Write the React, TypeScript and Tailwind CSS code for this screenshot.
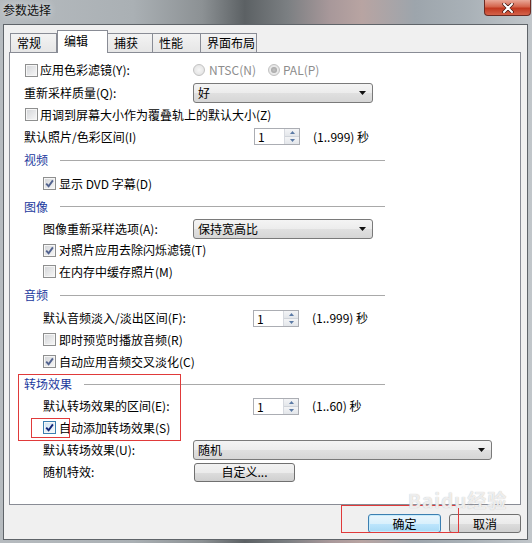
import React from "react";

const Check = ({ checked = false, strong = false }: { checked?: boolean; strong?: boolean }) => (
  <span
    className={`inline-flex h-[13px] w-[13px] shrink-0 items-center justify-center border ${
      strong ? "border-[#3c7fb1] bg-[linear-gradient(135deg,#cfe3f2,#f4f9fd)]" : "border-[#8e8f8f] bg-[linear-gradient(135deg,#d2d4d7,#f8f8f8)]"
    } shadow-[inset_0_0_0_1px_#f6f6f6]`}
  >
    {checked && (
      <svg width="9" height="9" viewBox="0 0 9 9">
        <path d="M1.2 4.6 L3.6 7.2 L7.9 1.4" fill="none" stroke={strong ? "#13277a" : "#52638f"} strokeWidth="1.9" />
      </svg>
    )}
  </span>
);

const Radio = ({ on = false }: { on?: boolean }) => (
  <span className="inline-flex h-[12px] w-[12px] shrink-0 items-center justify-center rounded-full border border-[#c2c2c2] bg-[radial-gradient(circle,#f6f6f6,#dedede)]">
    {on && <span className="h-[6px] w-[6px] rounded-full bg-[radial-gradient(circle,#c4c4c4,#9b9b9b)]" />}
  </span>
);

const Arrow = () => (
  <svg width="7" height="4" viewBox="0 0 7 4">
    <path d="M0 0 H7 L3.5 4 Z" fill="#111" />
  </svg>
);

const Combo = ({ value, width }: { value: string; width: string }) => (
  <div
    className={`flex h-[20px] items-center justify-between rounded-[3px] border border-[#7a7a7a] bg-[linear-gradient(#f4f4f4,#ececec_50%,#e0e0e0_51%,#d6d6d6)] pl-[4px] pr-[6px] ${width}`}
  >
    <span>{value}</span>
    <Arrow />
  </div>
);

const Spin = () => (
  <div className="flex h-[17px] w-[46px] border border-[#abadb3] bg-white">
    <span className="flex-1 pl-[3px] leading-[15px]">1</span>
    <div className="flex w-[15px] flex-col border-l border-[#d6d9df] bg-[#eceef1]">
      <div className="flex flex-1 items-center justify-center border-b border-[#d0d4da] bg-[linear-gradient(#f3f4f6,#e3e6ea)]">
        <svg width="5" height="3" viewBox="0 0 5 3">
          <path d="M0 3 L2.5 0 L5 3 Z" fill="#5b7aa5" />
        </svg>
      </div>
      <div className="flex flex-1 items-center justify-center bg-[linear-gradient(#f3f4f6,#e3e6ea)]">
        <svg width="5" height="3" viewBox="0 0 5 3">
          <path d="M0 0 H5 L2.5 3 Z" fill="#5b7aa5" />
        </svg>
      </div>
    </div>
  </div>
);

const Header = ({ title, h }: { title: string; h: string }) => (
  <div className={`flex w-[375px] items-center gap-[12px] pl-[14px] ${h}`}>
    <span className="text-[#1c3a9e]">{title}</span>
    <span className="h-px flex-1 bg-[#a9a9a9]" />
  </div>
);

const CheckRow = ({ label, checked, h, strong }: { label: string; checked?: boolean; h: string; strong?: boolean }) => (
  <div className={`flex items-center gap-[3px] pl-[33px] ${h}`}>
    <Check checked={checked} strong={strong} />
    <span>{label}</span>
  </div>
);

const tabs = [
  { name: "常规", w: "w-[47px]" },
  { name: "编辑", w: "w-[51px]", active: true },
  { name: "捕获", w: "w-[46px]" },
  { name: "性能", w: "w-[49px]" },
  { name: "界面布局", w: "w-[57px]" },
];

const btn =
  "flex h-[19px] items-center justify-center rounded-[3px] border";

export default function App() {
  return (
    <div className="relative flex h-[543px] w-[532px] flex-col bg-[linear-gradient(90deg,#b6bbbf_0%,#aab0b4_25%,#8c9194_38%,#5c6164_46%,#7b7f82_54%,#a8989a_62%,#b8a4a2_68%,#9da5ac_78%,#a9b1b7_88%,#c1c6ca_100%)] font-['Noto_Sans_CJK_SC',sans-serif] text-[12px] text-black">
      {/* title bar */}
      <div className="flex h-[24px] shrink-0 items-start justify-between">
        <span className="pl-[3px] pt-[2px] leading-[16px] text-[#111] [text-shadow:0_0_6px_#e8ecef]">参数选择</span>
        <div className="mr-[1px] flex h-[16px] w-[47px] items-center justify-center rounded-b-[4px] border border-t-0 border-[#6b2a22] bg-[linear-gradient(#e9a898,#d4644c_45%,#c1381f_55%,#d4624a)]">
          <svg width="12" height="10" viewBox="0 0 12 10">
            <path d="M2 1 L10 9 M10 1 L2 9" stroke="#3b1510" strokeWidth="3.4" strokeLinecap="round" />
            <path d="M2 1 L10 9 M10 1 L2 9" stroke="#fff" strokeWidth="2" strokeLinecap="round" />
          </svg>
        </div>
      </div>

      {/* window body */}
      <div className="ml-[3px] mr-[4px] flex h-[516px] flex-col border border-[#5f6469] bg-[#f0f0f0] pl-[5px] pt-[5px]">
        {/* tabs */}
        <div className="flex h-[22px] items-end pl-[1px]">
          {tabs.map((t) =>
            t.active ? (
              <div
                key={t.name}
                className={`relative z-10 -mb-px flex h-[23px] items-center border border-b-0 border-[#898c95] bg-white pb-[2px] pl-[6px] ${t.w}`}
              >
                {t.name}
              </div>
            ) : (
              <div
                key={t.name}
                className={`-ml-px flex h-[19px] items-center border border-b-0 border-[#898c95] bg-[linear-gradient(#f3f3f3,#e6e6e6)] pl-[6px] first:ml-0 ${t.w}`}
              >
                {t.name}
              </div>
            )
          )}
        </div>

        {/* panel */}
        <div className="flex w-[512px] flex-col">
          <div className="flex h-[453px] flex-col border border-[#898c95] bg-white pt-[6px] leading-[14px]">
            <div className="flex h-[22px] items-center">
              <div className="flex w-[183px] items-center gap-[2px] pl-[15px]">
                <Check />
                <span>应用色彩滤镜(Y):</span>
              </div>
              <div className="flex items-center gap-[4px] text-[#8d8d8d]">
                <Radio />
                <span>NTSC(N)</span>
              </div>
              <div className="ml-[12px] flex items-center gap-[3px] text-[#8d8d8d]">
                <Radio on />
                <span>PAL(P)</span>
              </div>
            </div>
            <div className="flex h-[23px] items-center pl-[14px]">
              <span className="w-[169px]">重新采样质量(Q):</span>
              <Combo value="好" width="w-[180px]" />
            </div>
            <div className="flex h-[21px] items-center gap-[2px] pl-[15px]">
              <Check />
              <span>用调到屏幕大小作为覆叠轨上的默认大小(Z)</span>
            </div>
            <div className="flex h-[23px] items-center pl-[14px]">
              <span className="w-[230px]">默认照片/色彩区间(I)</span>
              <Spin />
              <span className="ml-[13px]">(1..999) 秒</span>
            </div>

            <Header title="视频" h="h-[24px]" />
            <CheckRow label="显示 DVD 字幕(D)" checked h="h-[23px]" />

            <Header title="图像" h="h-[23px]" />
            <div className="flex h-[22px] items-center pl-[33px]">
              <span className="w-[150px]">图像重新采样选项(A):</span>
              <Combo value="保持宽高比" width="w-[180px]" />
            </div>
            <CheckRow label="对照片应用去除闪烁滤镜(T)" checked h="h-[20px]" />
            <CheckRow label="在内存中缓存照片(M)" h="h-[23px]" />

            <Header title="音频" h="h-[24px]" />
            <div className="flex h-[22px] items-center pl-[33px]">
              <span className="w-[210px]">默认音频淡入/淡出区间(F):</span>
              <Spin />
              <span className="ml-[13px]">(1..999) 秒</span>
            </div>
            <CheckRow label="即时预览时播放音频(R)" h="h-[21px]" />
            <CheckRow label="自动应用音频交叉淡化(C)" checked h="h-[23px]" />

            <Header title="转场效果" h="h-[22px]" />
            <div className="flex h-[22px] items-center pl-[33px]">
              <span className="w-[210px]">默认转场效果的区间(E):</span>
              <Spin />
              <span className="ml-[13px]">(1..60) 秒</span>
            </div>
            <CheckRow label="自动添加转场效果(S)" checked strong h="h-[21px]" />
            <div className="flex h-[23px] items-center pl-[33px]">
              <span className="w-[150px]">默认转场效果(U):</span>
              <Combo value="随机" width="w-[299px]" />
            </div>
            <div className="flex h-[22px] items-center pl-[33px]">
              <span className="w-[151px]">随机特效:</span>
              <div className={`${btn} w-[101px] border-[#707070] bg-[linear-gradient(#f2f2f2,#ebebeb_50%,#dddddd_51%,#cfcfcf)]`}>
                自定义...
              </div>
            </div>
          </div>

          {/* buttons */}
          <div className="mt-[9px] flex justify-end gap-[8px]">
            <div className={`${btn} w-[73px] border-[#3c7fb1] bg-[linear-gradient(#eaf6fd,#d9f0fc_50%,#bee6fd_51%,#a7d9f5)] shadow-[inset_0_0_0_1px_#c7ecfc]`}>
              确定
            </div>
            <div className={`${btn} w-[72px] border-[#707070] bg-[linear-gradient(#f2f2f2,#ebebeb_50%,#dddddd_51%,#cfcfcf)]`}>
              取消
            </div>
          </div>
        </div>
      </div>

      {/* annotations */}
      <div className="absolute left-[18px] top-[374px] h-[67px] w-[163px] border border-[#e03a3a]" />
      <div className="absolute left-[31px] top-[418px] h-[20px] w-[39px] border border-[#e03a3a]" />
      <div className="absolute left-[341px] top-[505px] h-[28px] w-[118px] border border-[#e03a3a]" />
      <div className="pointer-events-none absolute left-[408px] top-[490px] text-[19px] font-bold leading-none tracking-[1px] text-white/75 [text-shadow:0_0_1px_#b4b4b4]">
        Baidu经验
      </div>
    </div>
  );
}
